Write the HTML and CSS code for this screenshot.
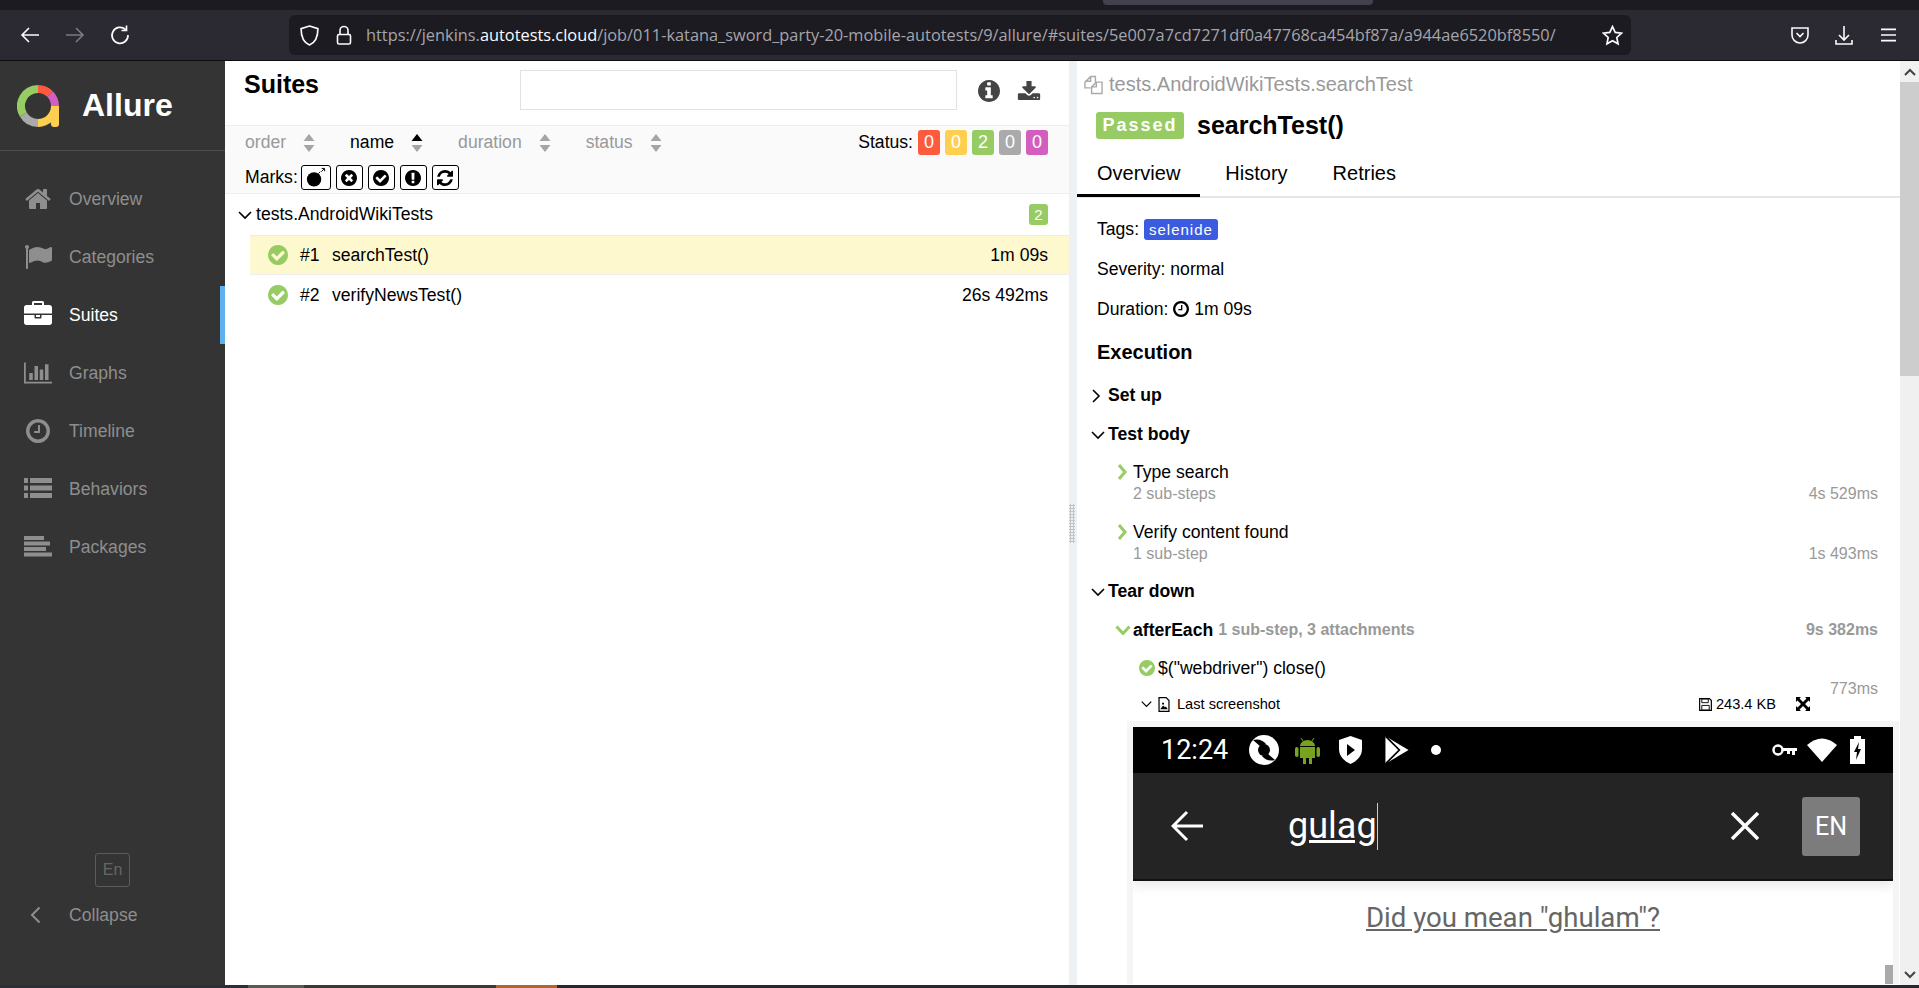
FILE: index.html
```html
<!DOCTYPE html>
<html lang="en">
<head>
  <meta charset="UTF-8">
  <title>Allure Report</title>
  <link rel="stylesheet" href="styles.css">
</head>
<body>
  <svg class="defs" xmlns="http://www.w3.org/2000/svg">
    <symbol id="i-check" viewBox="128 128 1536 1536"><path d="M1412 734q0-28-18-46l-91-90q-19-19-45-19t-45 19l-408 407-226-226q-19-19-45-19t-45 19l-91 90q-18 18-18 46 0 27 18 45l362 362q19 19 45 19 27 0 46-19l543-543q18-18 18-45zm252 162q0 209-103 385.5t-279.5 279.5-385.5 103-385.5-103-279.5-279.5-103-385.5 103-385.5 279.5-279.5 385.5-103 385.5 103 279.5 279.5 103 385.5z"/></symbol>
    <symbol id="i-sort" viewBox="0 0 12 20"><path class="up" d="M6 1l5.5 7H.5z"/><path class="down" d="M6 19L.5 12h11z"/></symbol>
    <symbol id="i-down" viewBox="0 0 14 10"><path d="M1 2l6 6 6-6" fill="none" stroke="currentColor" stroke-width="1.6"/></symbol>
    <symbol id="i-right" viewBox="0 0 10 14"><path d="M2 1l6 6-6 6" fill="none" stroke="currentColor" stroke-width="1.6"/></symbol>
  </svg>

  <header class="browser">
    <div class="tabstrip"><div class="tab"></div></div>
    <div class="toolbar">
      <div class="nav-btns">
        <svg class="tb-ico" viewBox="0 0 20 20"><path d="M19 10H2M9 3l-7 7 7 7" fill="none" stroke="#fbfbfe" stroke-width="1.6"/></svg>
        <svg class="tb-ico" viewBox="0 0 20 20"><path d="M1 10h17M11 3l7 7-7 7" fill="none" stroke="#7b7a82" stroke-width="1.6"/></svg>
        <svg class="tb-ico" viewBox="0 0 20 20"><path d="M15.5 4.5A8 8 0 1 0 18 10M16.500 .5v5h-5" fill="none" stroke="#fbfbfe" stroke-width="1.7"/></svg>
      </div>
      <div class="urlbar">
        <svg class="url-ico" viewBox="0 0 18 20"><path d="M9 1l8 2.500c0 8-2 13-8 15.500C3 16.500 1 11.500 1 3.500z" fill="none" stroke="#fbfbfe" stroke-width="1.6"/></svg>
        <svg class="url-ico lock" viewBox="0 0 16 20"><path d="M4 9V5a4 4 0 0 1 8 0v4" fill="none" stroke="#fbfbfe" stroke-width="1.600"/><rect x="1.500" y="9" width="13" height="9.500" rx="1.500" fill="none" stroke="#fbfbfe" stroke-width="1.600"/></svg>
        <span class="url">https://jenkins.<b>autotests.cloud</b>/job/011-katana_sword_party-20-mobile-autotests/9/allure/#suites/5e007a7cd7271df0a47768ca454bf87a/a944ae6520bf8550/</span>
        <svg class="url-ico star" viewBox="0 0 20 20"><path d="M10 1.500l2.600 5.600 6 .7-4.500 4.100 1.200 6L10 15l-5.300 2.900 1.200-6L1.400 7.800l6-.7z" fill="none" stroke="#fbfbfe" stroke-width="1.600"/></svg>
      </div>
      <div class="tb-right">
        <svg class="tb-ico" viewBox="0 0 20 20"><path d="M2 3h16v7a8 8 0 0 1-16 0z" fill="none" stroke="#fbfbfe" stroke-width="1.600"/><path d="M6.500 8l3.500 3.500L13.500 8" fill="none" stroke="#fbfbfe" stroke-width="1.600"/></svg>
        <svg class="tb-ico" viewBox="0 0 20 20"><path d="M10 1v14M5 10l5 5 5-5M2 15v4h16v-4" fill="none" stroke="#fbfbfe" stroke-width="1.600"/></svg>
        <svg class="tb-ico small" viewBox="0 0 16 20"><path d="M0 4h16M0 10h16M0 16h16" stroke="#fbfbfe" stroke-width="1.700"/></svg>
      </div>
    </div>
  </header>

  <div class="app">
    <aside class="sidebar">
      <div class="brand">
        <svg class="logo" viewBox="0 0 42 42">
          <g fill="none" stroke-width="8">
            <path d="M21 4A17 17 0 0 1 33 9" stroke="#fd5a3e"/>
            <path d="M33 9A17 17 0 0 1 38 21" stroke="#d35ebe"/>
            <path d="M38 21A17 17 0 0 1 21 38" stroke="#ffd050"/>
            <path d="M21 38A17 17 0 0 1 6.300 29.500" stroke="#aaa"/>
            <path d="M6.300 29.500A17 17 0 0 1 21 4" stroke="#97cc64"/>
          </g>
          <path d="M34 21h8v18a3 3 0 0 1-3 3h-2a3 3 0 0 1-3-3z" fill="#ffd050"/>
        </svg>
        <span class="brand-name">Allure</span>
      </div>
      <nav class="menu">
        <a class="menu-item"><svg class="menu-ico" viewBox="0 0 1792 1792"><path d="M1472 992v480q0 26-19 45t-45 19h-384v-384h-256v384h-384q-26 0-45-19t-19-45v-480q0-1 .5-3t.5-3l575-474 575 474q1 2 1 6zm223-69l-62 74q-8 9-21 11h-3q-13 0-21-7l-692-577-692 577q-12 8-24 7-13-2-21-11l-62-74q-8-10-7-23.5t11-21.5l719-599q32-26 76-26t76 26l244 204v-195q0-14 9-23t23-9h192q14 0 23 9t9 23v408l219 182q10 8 11 21.5t-7 23.5z"/></svg>Overview</a>
        <a class="menu-item"><svg class="menu-ico" viewBox="0 0 1792 1792"><path d="M320 256q0 72-64 110v1266q0 13-9.500 22.500t-22.500 9.500h-64q-13 0-22.500-9.500t-9.500-22.500v-1266q-64-38-64-110 0-53 37.500-90.500t90.500-37.500 90.500 37.500 37.500 90.500zm1472 64v763q0 25-12.500 38.500t-39.500 27.500q-215 116-369 116-61 0-123.500-22t-108.500-48-115.500-48-142.500-22q-192 0-464 146-17 9-33 9-26 0-45-19t-19-45v-742q0-32 31-55 21-14 79-43 236-120 421-120 107 0 200 29t219 88q38 19 88 19 54 0 117.500-21t110-47 88-47 54.500-21q26 0 45 19t19 45z"/></svg>Categories</a>
        <a class="menu-item active"><svg class="menu-ico" viewBox="0 0 1792 1792"><path d="M640 256h512v-128h-512v128zm1152 640v480q0 66-47 113t-113 47h-1472q-66 0-113-47t-47-113v-480h672v160q0 26 19 45t45 19h320q26 0 45-19t19-45v-160h672zm-768 0v128h-256v-128h256zm768-480v384h-1792v-384q0-66 47-113t113-47h352v-160q0-40 28-68t68-28h576q40 0 68 28t28 68v160h352q66 0 113 47t47 113z"/></svg>Suites</a>
        <a class="menu-item"><svg class="menu-ico" viewBox="0 0 2048 1792"><path d="M640 896v512h-256v-512h256zm384-512v1024h-256v-1024h256zm1024 1152v128h-2048v-1536h128v1408h1920zm-640-896v768h-256v-768h256zm384-384v1152h-256v-1152h256z"/></svg>Graphs</a>
        <a class="menu-item"><svg class="menu-ico" viewBox="0 0 1792 1792"><path d="M1024 544v448q0 14-9 23t-23 9h-320q-14 0-23-9t-9-23v-64q0-14 9-23t23-9h224v-352q0-14 9-23t23-9h64q14 0 23 9t9 23zm416 352q0-148-73-273t-198-198-273-73-273 73-198 198-73 273 73 273 198 198 273 73 273-73 198-198 73-273zm224 0q0 209-103 385.500t-279.500 279.500-385.500 103-385.500-103-279.500-279.500-103-385.500 103-385.500 279.500-279.500 385.500-103 385.500 103 279.500 279.500 103 385.500z"/></svg>Timeline</a>
        <a class="menu-item"><svg class="menu-ico" viewBox="0 0 28 22"><path d="M0 0h4v5H0zM6 0h22v5H6zM0 7.500h4v5H0zM6 7.500h22v5H6zM0 15h4v5H0zM6 15h22v5H6z"/></svg>Behaviors</a>
        <a class="menu-item"><svg class="menu-ico" viewBox="0 0 28 22"><path d="M0 0h20v4H0zM0 5.500h26v4H0zM0 11h22v4H0zM0 16.500h28v4H0z"/></svg>Packages</a>
      </nav>
      <div class="side-foot">
        <div class="lang-wrap"><span class="lang">En</span></div>
        <a class="collapse"><svg class="collapse-ico" viewBox="0 0 11 18"><path d="M9.500 1.500L2 9l7.500 7.500" fill="none" stroke="currentColor" stroke-width="2"/></svg>Collapse</a>
      </div>
    </aside>

    <main class="suites">
      <div class="suites-head">
        <h1 class="suites-title">Suites</h1>
        <input class="search" type="text">
        <svg class="head-ico info" viewBox="128 128 1536 1536"><path d="M1152 1376v-160q0-14-9-23t-23-9h-96v-512q0-14-9-23t-23-9h-320q-14 0-23 9t-9 23v160q0 14 9 23t23 9h96v320h-96q-14 0-23 9t-9 23v160q0 14 9 23t23 9h448q14 0 23-9t9-23zm-128-896v-160q0-14-9-23t-23-9h-192q-14 0-23 9t-9 23v160q0 14 9 23t23 9h192q14 0 23-9t9-23zm640 416q0 209-103 385.500t-279.500 279.500-385.500 103-385.500-103-279.500-279.500-103-385.500 103-385.500 279.500-279.500 385.500-103 385.500 103 279.500 279.500 103 385.500z"/></svg>
        <svg class="head-ico dl" viewBox="0 128 1792 1536"><path d="M1344 1344q0-26-19-45t-45-19-45 19-19 45 19 45 45 19 45-19 19-45zm256 0q0-26-19-45t-45-19-45 19-19 45 19 45 45 19 45-19 19-45zm128-224v320q0 40-28 68t-68 28h-1472q-40 0-68-28t-28-68v-320q0-40 28-68t68-28h465l135 136q58 56 136 56t136-56l136-136h464q40 0 68 28t28 68zm-325-569q17 41-14 70l-448 448q-18 19-45 19t-45-19l-448-448q-31-29-14-70 17-39 59-39h256v-448q0-26 19-45t45-19h256q26 0 45 19t19 45v448h256q42 0 59 39z"/></svg>
      </div>
      <div class="filters">
        <div class="sort-row">
          <span class="sort">order<svg class="sort-ico"><use href="#i-sort"/></svg></span>
          <span class="sort current">name<svg class="sort-ico"><use href="#i-sort"/></svg></span>
          <span class="sort">duration<svg class="sort-ico"><use href="#i-sort"/></svg></span>
          <span class="sort">status<svg class="sort-ico"><use href="#i-sort"/></svg></span>
          <div class="status-filter">Status:
            <span class="count red">0</span><span class="count yellow">0</span><span class="count green">2</span><span class="count gray">0</span><span class="count purple">0</span>
          </div>
        </div>
        <div class="marks-row">Marks:
          <button class="mark wide"><svg viewBox="0 0 22 22"><circle cx="9.500" cy="13" r="7.500"/><path d="M14 7l2-2M17 5l3-3M17.500 1.500h3v3" fill="none" stroke="#000" stroke-width="1"/></svg></button>
          <button class="mark"><svg viewBox="128 128 1536 1536"><path d="M1277 1122q0-26-19-45l-181-181 181-181q19-19 19-45 0-27-19-46l-90-90q-19-19-46-19-26 0-45 19l-181 181-181-181q-19-19-45-19-27 0-46 19l-90 90q-19 19-19 46 0 26 19 45l181 181-181 181q-19 19-19 45 0 27 19 46l90 90q19 19 46 19 26 0 45-19l181-181 181 181q19 19 45 19 27 0 46-19l90-90q19-19 19-46zm387-226q0 209-103 385.500t-279.500 279.500-385.500 103-385.500-103-279.500-279.500-103-385.500 103-385.500 279.500-279.500 385.500-103 385.500 103 279.500 279.500 103 385.500z"/></svg></button>
          <button class="mark"><svg><use href="#i-check"/></svg></button>
          <button class="mark"><svg viewBox="128 128 1536 1536"><path d="M896 128q209 0 385.500 103t279.500 279.500 103 385.500-103 385.500-279.500 279.500-385.500 103-385.500-103-279.500-279.500-103-385.500 103-385.500 279.500-279.500 385.500-103zm128 1247v-190q0-14-9-23.500t-22-9.500h-192q-13 0-23 10t-10 23v190q0 13 10 23t23 10h192q13 0 22-9.500t9-23.500zm-2-344l18-621q0-12-10-18-10-8-24-8h-220q-14 0-24 8-10 6-10 18l17 621q0 10 10 17.500t24 7.500h185q14 0 23.500-7.500t10.500-17.500z"/></svg></button>
          <button class="mark"><svg viewBox="128 128 1536 1536"><path d="M1639 1056q0 5-1 7-64 268-268 434.500t-478 166.500q-146 0-282.500-55t-243.500-157l-129 129q-19 19-45 19t-45-19-19-45v-448q0-26 19-45t45-19h448q26 0 45 19t19 45-19 45l-137 137q71 66 161 102t187 36q134 0 250-65t186-179q11-17 53-117 8-23 30-23h192q13 0 22.500 9.500t9.500 22.500zm25-800v448q0 26-19 45t-45 19h-448q-26 0-45-19t-19-45 19-45l138-138q-148-137-349-137-134 0-250 65t-186 179q-11 17-53 117-8 23-30 23h-199q-13 0-22.500-9.500t-9.500-22.500v-7q65-268 270-434.500t480-166.500q146 0 284 55.500t245 156.500l130-129q19-19 45-19t45 19 19 45z"/></svg></button>
        </div>
      </div>
      <div class="tree">
        <div class="tree-group">
          <svg class="tree-chev"><use href="#i-down"/></svg>
          <span class="tree-name">tests.AndroidWikiTests</span>
          <span class="count green small">2</span>
        </div>
        <div class="tree-row selected">
          <svg class="pass-ico"><use href="#i-check"/></svg>
          <span class="num">#1</span><span class="test-name">searchTest()</span><span class="time">1m 09s</span>
        </div>
        <div class="tree-row">
          <svg class="pass-ico"><use href="#i-check"/></svg>
          <span class="num">#2</span><span class="test-name">verifyNewsTest()</span><span class="time">26s 492ms</span>
        </div>
      </div>
    </main>

    <div class="splitter"><div class="grip"></div></div>

    <section class="details">
      <div class="details-head">
        <div class="crumb">
          <svg class="copy-ico" viewBox="0 0 20 20"><path d="M7 13H1V7l6-6h5v6M7 1v5H1M8 19v-7l5-5h6v12zM13 7v5H8" fill="none" stroke="#aaa" stroke-width="1.500"/></svg>tests.AndroidWikiTests.searchTest
        </div>
        <div class="title-row"><span class="passed">Passed</span><h2 class="test-title">searchTest()</h2></div>
        <div class="tabs">
          <a class="tab-link current">Overview</a><a class="tab-link">History</a><a class="tab-link">Retries</a>
        </div>
      </div>
      <div class="details-body">
        <div class="meta">Tags: <span class="tag">selenide</span></div>
        <div class="meta">Severity: normal</div>
        <div class="meta">Duration: <svg class="clock" viewBox="128 128 1536 1536"><path d="M1024 544v448q0 14-9 23t-23 9h-320q-14 0-23-9t-9-23v-64q0-14 9-23t23-9h224v-352q0-14 9-23t23-9h64q14 0 23 9t9 23zm416 352q0-148-73-273t-198-198-273-73-273 73-198 198-73 273 73 273 198 198 273 73 273-73 198-198 73-273zm224 0q0 209-103 385.500t-279.500 279.500-385.500 103-385.500-103-279.500-279.500-103-385.500 103-385.500 279.500-279.500 385.500-103 385.500 103 279.500 279.500 103 385.500z"/></svg> 1m 09s</div>
        <h3 class="exec">Execution</h3>
        <div class="stage"><svg class="stage-chev right"><use href="#i-right"/></svg>Set up</div>
        <div class="stage"><svg class="stage-chev"><use href="#i-down"/></svg>Test body</div>
        <div class="step">
          <svg class="step-chev" viewBox="0 0 10 16"><path d="M2 1l6 7-6 7" fill="none" stroke="#97cc64" stroke-width="3"/></svg>
          <div class="step-main">
            <div class="step-name">Type search</div>
            <div class="step-sub"><span>2 sub-steps</span><span>4s 529ms</span></div>
          </div>
        </div>
        <div class="step">
          <svg class="step-chev" viewBox="0 0 10 16"><path d="M2 1l6 7-6 7" fill="none" stroke="#97cc64" stroke-width="3"/></svg>
          <div class="step-main">
            <div class="step-name">Verify content found</div>
            <div class="step-sub"><span>1 sub-step</span><span>1s 493ms</span></div>
          </div>
        </div>
        <div class="stage tear"><svg class="stage-chev"><use href="#i-down"/></svg>Tear down</div>
        <div class="after-each">
          <svg class="after-chev" viewBox="0 0 16 10"><path d="M1.500 1.500l6.500 7 6.500-7" fill="none" stroke="#97cc64" stroke-width="3"/></svg>
          <b class="after-name">afterEach</b>
          <b class="after-info">1 sub-step, 3 attachments</b>
          <b class="after-time">9s 382ms</b>
        </div>
        <div class="sub-block">
          <div class="sub-rows">
            <div class="sub-step"><svg class="pass-ico tiny"><use href="#i-check"/></svg>$("webdriver") close()</div>
            <div class="attachment">
              <svg class="att-chev"><use href="#i-down"/></svg>
              <svg class="att-ico" viewBox="0 0 12 16"><path d="M.7.700h7.600l3 3v11.600H.7z" fill="#fff" stroke="#000" stroke-width="1.300"/><path d="M2 13l3-4 2 2 1-1 2 3zM4 6h2v2H4z"/></svg>
              <span class="att-name">Last screenshot</span>
              <svg class="att-ico size" viewBox="0 0 14 14"><path d="M.7.700h10.600l2 2v10.600H.7z" fill="none" stroke="#000" stroke-width="1.300"/><path d="M3 1h7v4H3zM3 8h8v5H3z" fill="none" stroke="#000"/></svg>
              <span class="att-size">243.4 KB</span>
              <svg class="att-expand" viewBox="0 0 14 14"><path d="M0 0h5L3.500 1.500 7 5l3.500-3.500L9 0h5v5l-1.500-1.500L9 7l3.500 3.500L14 9v5H9l1.500-1.500L7 9l-3.500 3.500L5 14H0V9l1.500 1.500L5 7 1.500 3.500 0 5z"/></svg>
            </div>
          </div>
          <span class="sub-time">773ms</span>
        </div>
        <div class="shot">
          <div class="phone">
            <div class="phone-status">
              <span class="clock-text">12:24</span>
              <svg class="st-ico" viewBox="0 0 30 30"><circle cx="15" cy="15" r="15" fill="#fff"/><circle cx="15" cy="15" r="6" fill="#000"/><path d="M4 5q8-2 13 4l-5 3zM26 25q-8 2-13-4l5-3z" fill="#000"/></svg>
              <svg class="st-ico droid" viewBox="0 0 25 28"><path d="M6 2l2 3M19 2l-2 3" stroke="#78a31c" stroke-width="1"/><path d="M5 10a7.500 6 0 0 1 15 0zM5 11h15v11H5zM8 22h3v6H8zM14 22h3v6h-3z" fill="#78a31c"/><rect y="11" width="3.500" height="10" rx="1.700" fill="#78a31c"/><rect x="21.500" y="11" width="3.500" height="10" rx="1.700" fill="#78a31c"/></svg>
              <svg class="st-ico shield" viewBox="0 0 23 28"><path d="M11.500 0L23 4v9c0 7-5 12-11.500 15C5 25 0 20 0 13V4z" fill="#fff"/><path d="M8 8l8 6-8 6z" fill="#000"/></svg>
              <svg class="st-ico" viewBox="0 0 22 26"><path d="M1 1l20 12L1 25z" fill="#fff"/><path d="M1 1l12 12L1 25" fill="none" stroke="#000" stroke-width="1.500"/></svg>
              <span class="st-dot"></span>
              <span class="st-right">
                <svg class="st-ico" viewBox="0 0 25 16"><circle cx="6" cy="8" r="4.500" fill="none" stroke="#fff" stroke-width="2.500"/><path d="M10 6h15v3h-2v4h-3V9h-2v3h-3V9h-5z" fill="#fff"/></svg>
                <svg class="st-ico" viewBox="0 0 30 24"><path d="M15 24L0 7q15-13 30 0z" fill="#fff"/></svg>
                <svg class="st-ico" viewBox="0 0 15 28"><path d="M4 0h7v3h4v25H0V3h4z" fill="#fff"/><path d="M9 6l-5 10h3l-1 8 5-11H8z" fill="#000"/></svg>
              </span>
            </div>
            <div class="phone-search">
              <svg class="ph-back" viewBox="0 0 32 32"><path d="M32 16H3M16 2L2 16l14 14" fill="none" stroke="#fff" stroke-width="3"/></svg>
              <span class="ph-query">gulag</span>
              <svg class="ph-close" viewBox="0 0 28 28"><path d="M1 1l26 26M27 1L1 27" stroke="#fff" stroke-width="3.500"/></svg>
              <span class="ph-lang">EN</span>
            </div>
            <div class="phone-body"><a class="ph-suggest">Did you mean "ghulam"?</a></div>
          </div>
          <div class="shot-thumb"></div>
        </div>
      </div>
    </section>

    <div class="scrollbar">
      <div class="sb-btn"><svg viewBox="0 0 12 8"><path d="M1 7l5-5 5 5" fill="none" stroke="#444" stroke-width="2"/></svg></div>
      <div class="sb-thumb"></div>
      <div class="sb-btn bottom"><svg viewBox="0 0 12 8"><path d="M1 1l5 5 5-5" fill="none" stroke="#444" stroke-width="2"/></svg></div>
    </div>
  </div>

  <div class="taskbar">
    <span class="seg a"></span><span class="seg b"></span><span class="seg c"></span><span class="seg d"></span><span class="seg e"></span>
  </div>
</body>
</html>
```

FILE: styles.css
```css
* { box-sizing: border-box; }
html, body { margin: 0; padding: 0; height: 100%; overflow: hidden; }
body { display: flex; flex-direction: column; font-family: "Liberation Sans", Arial, sans-serif; font-size: 17.6px; color: #000; background: #fff; }
h1, h2, h3 { margin: 0; }
.defs { display: none; }

/* browser chrome */
.browser { flex: none; height: 61px; background: #2b2a33; border-bottom: 1px solid #0c0c0d; }
.tabstrip { height: 10px; background: #1c1b22; padding-left: 1103px; }
.tab { width: 270px; height: 5px; background: #42414d; border-radius: 0 0 4px 4px; }
.toolbar { height: 50px; display: flex; align-items: center; }
.nav-btns { width: 289px; display: flex; gap: 25px; padding-left: 20px; }
.tb-ico { width: 20px; height: 20px; flex: none; }
.tb-ico.small { width: 15px; margin-left: 3px; }
.urlbar { width: 1342px; height: 40px; background: #1c1b22; border-radius: 6px; display: flex; align-items: center; padding-left: 11px; }
.url-ico { width: 19px; height: 21px; flex: none; }
.url-ico.lock { width: 16px; margin-left: 17px; }
.url-ico.star { width: 21px; margin-left: 46px; }
.url { margin-left: 14px; font-family: "Open Sans", sans-serif; font-size: 16.35px; color: #a5a5ab; white-space: nowrap; width: 1190px; overflow: hidden; }
.url b { font-weight: 400; color: #fbfbfe; }
.tb-right { display: flex; gap: 24px; margin-left: 159px; }

/* app layout */
.app { flex: 1; display: flex; min-height: 0; }
.taskbar { flex: none; height: 3px; display: flex; }
.seg { display: block; height: 3px; }
.seg.a { width: 248px; background: #2b3038; }
.seg.b { width: 56px; background: #5a5a55; }
.seg.c { width: 192px; background: #3a3a30; }
.seg.d { width: 61px; background: #b0662c; }
.seg.e { flex: 1; background: #26282c; }

/* sidebar */
.sidebar { flex: none; width: 225px; background: #343434; display: flex; flex-direction: column; }
.brand { height: 90px; display: flex; align-items: center; padding-left: 17px; border-bottom: 1px solid #4b4b4b; }
.logo { width: 42px; height: 42px; flex: none; }
.brand-name { margin-left: 23px; font-size: 32px; font-weight: 700; color: #fff; }
.menu { padding-top: 19px; }
.menu-item { height: 58px; display: flex; align-items: center; padding-left: 24px; color: #8e8e8e; }
.menu-ico { width: 28px; height: 28px; margin-right: 17px; fill: #8e8e8e; flex: none; }
.menu-item.active { color: #fff; border-right: 5px solid #5eb0ee; }
.menu-item.active .menu-ico { fill: #fff; }
.side-foot { margin-top: auto; padding-bottom: 57px; color: #8e8e8e; }
.lang-wrap { display: flex; justify-content: center; }
.lang { width: 35px; height: 34px; border: 1px solid #5b5b5b; border-radius: 3px; display: flex; align-items: center; justify-content: center; color: #666; font-size: 16px; }
.collapse { display: flex; align-items: center; margin-top: 15px; padding-left: 30px; height: 26px; }
.collapse-ico { width: 11px; height: 18px; margin-right: 28px; }

/* suites column */
.suites { flex: none; width: 844px; display: flex; flex-direction: column; }
.suites-head { height: 64px; display: flex; padding-left: 19px; }
.suites-title { font-size: 25px; line-height: 29px; margin-top: 9px; width: 276px; }
.search { width: 437px; height: 40px; margin-top: 9px; border: 1px solid #e2e2e2; background: #fff; }
.head-ico { flex: none; fill: #444; margin-top: 19px; }
.head-ico.info { width: 22px; height: 22px; margin-left: 21px; }
.head-ico.dl { width: 24px; height: 21px; margin-left: 17px; margin-top: 20px; }
.filters { height: 69px; background: #fafafa; border-top: 1px solid #eee; border-bottom: 1px solid #eee; padding: 0 21px 0 20px; }
.sort-row { height: 33px; display: flex; align-items: center; gap: 35px; }
.sort { display: flex; align-items: center; color: #999; }
.sort.current { color: #000; --sort-up: #000; }
.sort-ico { width: 12px; height: 20px; margin-left: 17px; fill: #a5a5a5; }
.up { fill: var(--sort-up, #a5a5a5); }
.status-filter { margin-left: auto; display: flex; align-items: center; gap: 5px; color: #000; }
.count { width: 22px; height: 25px; border-radius: 3px; color: #fff; display: flex; align-items: center; justify-content: center; font-size: 18px; }
.count.small { width: 19px; height: 21px; font-size: 15px; }
.red { background: #fd5a3e; }
.yellow { background: #ffd050; }
.green { background: #97cc64; }
.gray { background: #aaa; }
.purple { background: #d35ebe; }
.marks-row { height: 37px; display: flex; align-items: center; gap: 5px; }
.mark { width: 27px; height: 25px; padding: 0; border: 1px solid #000; border-radius: 3px; background: #fff; display: flex; align-items: center; justify-content: center; }
.mark.wide { width: 30px; margin-left: -2px; }
.mark svg { width: 16px; height: 16px; }
.mark.wide svg { width: 21px; height: 21px; }
.tree { flex: 1; }
.tree-group { height: 41px; display: flex; align-items: center; padding: 0 21px 0 13px; }
.tree-chev { width: 14px; height: 10px; margin-right: 4px; color: #000; }
.tree-name { flex: 1; }
.tree-row { height: 40px; margin-left: 25px; padding: 0 21px 0 18px; display: flex; align-items: center; }
.tree-row.selected { background: #fef8cf; border-top: 1px solid #f3eec8; border-bottom: 1px solid #eee; }
.pass-ico { width: 20px; height: 20px; fill: #97cc64; flex: none; margin-right: 12px; }
.num { width: 32px; }
.test-name { flex: 1; }

/* splitter + details */
.splitter { flex: none; width: 8px; background: #edf1f4; display: flex; align-items: center; }
.grip { width: 6px; height: 39px; background-image: radial-gradient(#c4c4c4 1px, transparent 1.300px); background-size: 3px 3px; }
.details { flex: none; width: 823px; height: 924px; overflow: hidden; }
.crumb { height: 44px; display: flex; align-items: center; padding: 3px 0 0 7px; color: #999; font-size: 20px; }
.copy-ico { width: 19px; height: 20px; margin-right: 6px; }
.title-row { height: 40px; display: flex; align-items: center; padding-left: 19px; }
.passed { height: 27px; width: 88px; background: #97cc64; color: #fff; font-weight: 700; font-size: 18px; letter-spacing: 2px; border-radius: 3px; display: flex; align-items: center; justify-content: center; }
.test-title { margin-left: 13px; font-size: 25px; }
.tabs { height: 53px; display: flex; align-items: flex-start; gap: 5px; border-bottom: 2px solid #e5e5e5; }
.tab-link { height: 52px; padding: 0 20px; line-height: 56px; font-size: 20px; }
.tab-link.current { border-bottom: 3px solid #000; }
.details-body { padding: 11px 22px 0 20px; }
.meta { height: 40px; display: flex; align-items: center; white-space: pre; }
.tag { height: 21px; width: 74px; background: #3b5be0; color: #fff; border-radius: 3px; font-size: 15px; letter-spacing: 1px; display: flex; align-items: center; justify-content: center; }
.clock { width: 16px; height: 16px; }
.exec { font-size: 20px; height: 47px; line-height: 46px; }
.stage { height: 39px; display: flex; align-items: center; font-weight: 700; margin-left: -6px; }
.stage-chev { width: 14px; height: 10px; margin-right: 3px; flex: none; }
.stage-chev.right { width: 10px; height: 14px; margin: 0 7px 0 0; }
.stage.tear { margin-top: 7px; }
.step { height: 44px; margin: 7px 0 0 20px; display: flex; }
.step + .step { margin-top: 16px; }
.step-chev { width: 10px; height: 16px; margin: 3px 6px 0 0; flex: none; }
.step-main { flex: 1; }
.step-name { height: 22px; line-height: 22px; }
.step-sub { height: 22px; line-height: 22px; display: flex; justify-content: space-between; color: #999; font-size: 16px; }
.after-each { height: 38px; display: flex; align-items: center; margin-left: 18px; white-space: pre; }
.after-chev { width: 16px; height: 10px; margin-right: 2px; flex: none; }
.after-info { margin-left: 5px; color: #999; font-size: 16px; }
.after-time { margin-left: auto; color: #999; font-size: 16px; }
.sub-block { display: flex; margin-left: 40px; height: 72px; align-items: center; }
.sub-rows { flex: 1; padding-right: 20px; }
.sub-step { height: 38px; display: flex; align-items: center; }
.pass-ico.tiny { width: 16px; height: 16px; margin: 0 3px 0 2px; }
.attachment { height: 34px; display: flex; align-items: center; font-size: 14.6px; padding-left: 4px; }
.att-chev { width: 11px; height: 8px; margin-right: 6px; }
.att-ico { width: 12px; height: 15px; margin-right: 7px; flex: none; }
.att-ico.size { width: 13px; height: 13px; margin: 0 4px 0 auto; }
.att-size { margin-right: 20px; }
.att-expand { width: 14px; height: 14px; }
.sub-time { color: #999; font-size: 16px; margin-top: 8px; }
.shot { position: relative; margin: 0 -21px 0 30px; height: 263px; padding: 6px 6px 0; background: #f5f5f5; }
.phone { height: 100%; background: #fff; overflow: hidden; font-family: Roboto, sans-serif; }
.phone-status { height: 46px; background: #000; display: flex; align-items: center; padding: 0 28px; color: #fff; }
.clock-text { font-size: 27px; width: 88px; }
.st-ico { width: 30px; height: 30px; flex: none; margin-right: 16px; }
.st-ico.droid { width: 25px; height: 28px; margin-right: 19px; }
.st-ico.shield { width: 23px; height: 28px; margin-right: 20px; }
.st-dot { width: 10px; height: 10px; border-radius: 50%; background: #fff; margin-left: 3px; }
.st-right { margin-left: auto; display: flex; align-items: center; }
.st-right .st-ico { width: 25px; height: 16px; margin-right: 10px; }
.st-right .st-ico:nth-child(2) { width: 30px; height: 24px; margin-right: 13px; }
.st-right .st-ico:nth-child(3) { width: 15px; height: 28px; margin-right: 0; }
.phone-search { height: 108px; background: #242424; border-bottom: 2px solid #111; display: flex; align-items: center; padding: 0 33px 0 38px; color: #fff; box-shadow: 0 6px 10px rgba(0, 0, 0, 0.08); }
.ph-back { width: 32px; height: 32px; flex: none; }
.ph-query { margin-left: 85px; font-size: 36px; text-decoration: underline; border-right: 1px solid #ccc; line-height: 47px; }
.ph-close { width: 28px; height: 28px; margin-left: auto; }
.ph-lang { width: 58px; height: 59px; margin-left: 43px; background: #7c7c7c; border-radius: 3px; display: flex; align-items: center; justify-content: center; font-size: 25px; }
.phone-body { padding-top: 20px; text-align: center; }
.ph-suggest { font-size: 27.6px; color: #666; text-decoration: underline; }
.shot-thumb { position: absolute; right: 6px; bottom: 0; width: 8px; height: 19px; background: #aaa; }

/* page scrollbar */
.scrollbar { flex: none; width: 19px; background: #f0f0f0; display: flex; flex-direction: column; }
.sb-btn { height: 21px; display: flex; align-items: center; justify-content: center; }
.sb-btn svg { width: 12px; height: 8px; }
.sb-thumb { height: 294px; background: #cdcdcd; }
.sb-btn.bottom { margin-top: auto; }
```
